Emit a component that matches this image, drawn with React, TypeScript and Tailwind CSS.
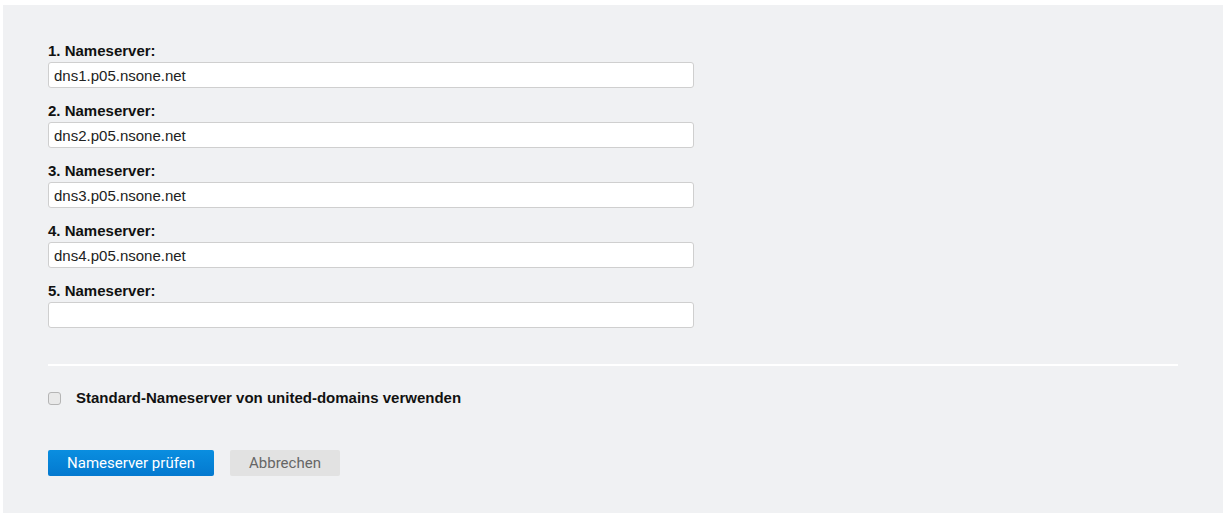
import React from 'react';

const servers = ['dns1.p05.nsone.net', 'dns2.p05.nsone.net', 'dns3.p05.nsone.net', 'dns4.p05.nsone.net', ''];

const App: React.FC = () => {
  return (
    <div className="min-h-screen bg-white pl-[3px] pt-[5px] font-['Liberation_Sans',Arial,sans-serif]">
      <div className="w-[1220px] h-[508px] bg-[#f0f1f3] px-[45px] pt-[37px]">
        {/* Nameserver fields */}
        <div className="flex flex-col gap-[14px] w-[646px]">
          {servers.map((s, i) => (
            <div key={i} className="flex flex-col">
              <label className="text-[15px] leading-[17px] font-bold text-[#111] mb-[3px]">{i + 1}. Nameserver:</label>
              <input
                defaultValue={s}
                className="h-[26px] w-full bg-white border border-[#cfcfcf] rounded-[3px] px-[5px] text-[15px] text-[#222] outline-none"
              />
            </div>
          ))}
        </div>

        <div className="mt-[36px] h-[2px] bg-white"></div>

        <label className="mt-[24px] flex items-center gap-[15px] h-[16px]">
          <span className="w-[13px] h-[13px] rounded-[3px] border border-[#b5b5b5] bg-[#e9e9e9]"></span>
          <span className="text-[15px] font-bold text-[#111]">Standard-Nameserver von united-domains verwenden</span>
        </label>

        <div className="mt-[44px] flex gap-[16px]">
          <button className="h-[26px] w-[166px] rounded-[2px] bg-gradient-to-b from-[#0a8ee0] to-[#0479cf] text-white text-[15px] font-['Roboto',sans-serif]">
            Nameserver prüfen
          </button>
          <button className="h-[26px] w-[110px] rounded-[2px] bg-[#e2e2e2] text-[#666] text-[15px] font-['Roboto',sans-serif]">
            Abbrechen
          </button>
        </div>
      </div>
    </div>
  );
};

export default App;
